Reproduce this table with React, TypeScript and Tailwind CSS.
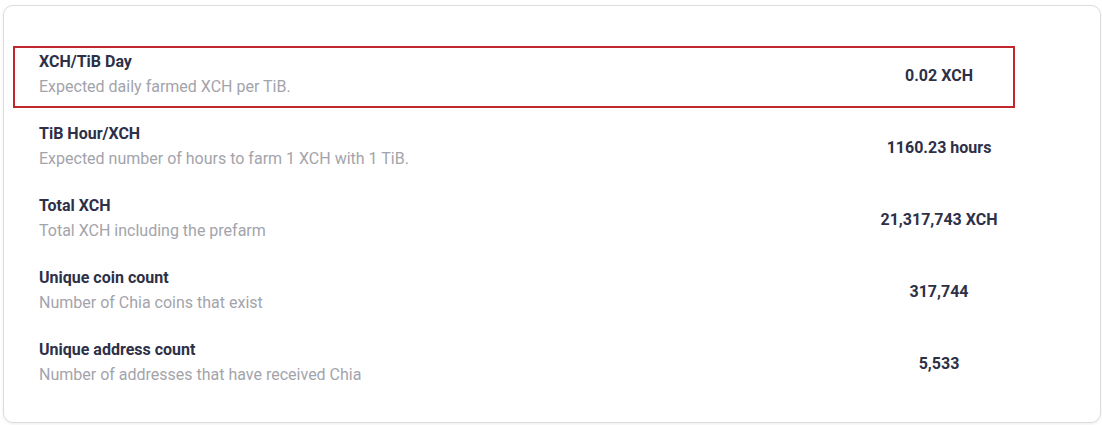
const rows = [
  { title: 'XCH/TiB Day', desc: 'Expected daily farmed XCH per TiB.', value: '0.02 XCH', highlight: true },
  { title: 'TiB Hour/XCH', desc: 'Expected number of hours to farm 1 XCH with 1 TiB.', value: '1160.23 hours' },
  { title: 'Total XCH', desc: 'Total XCH including the prefarm', value: '21,317,743 XCH' },
  { title: 'Unique coin count', desc: 'Number of Chia coins that exist', value: '317,744' },
  { title: 'Unique address count', desc: 'Number of addresses that have received Chia', value: '5,533' },
];

export default function App() {
  return (
    <div className="w-[1102px] h-[425px] bg-white pl-[3px] pt-[5px] font-['Roboto',sans-serif]">
      <div className="w-[1098px] h-[418px] rounded-[10px] border border-[#dcdde2] bg-white shadow-[0_1px_3px_rgba(0,0,0,0.08)] pl-[9px] pr-[85px] pt-[40px]">
        <div className="flex flex-col gap-[10px]">
          {rows.map((r) => (
            <div
              key={r.title}
              className={`flex items-center h-[62px] border-2 pl-[24px] ${
                r.highlight ? 'border-[#c1272d]' : 'border-transparent'
              }`}
            >
              <div className="flex-1 -mt-[4px]">
                <div className="text-[16px] leading-[21px] font-bold text-[#2d3047]">{r.title}</div>
                <div className="mt-[2px] text-[16px] leading-[25px] text-[#a3a4ab]">{r.desc}</div>
              </div>
              <div className="w-[148px] -mt-[3px] text-center text-[16px] font-bold text-[#2d3047]">{r.value}</div>
            </div>
          ))}
        </div>
      </div>
    </div>
  );
}
